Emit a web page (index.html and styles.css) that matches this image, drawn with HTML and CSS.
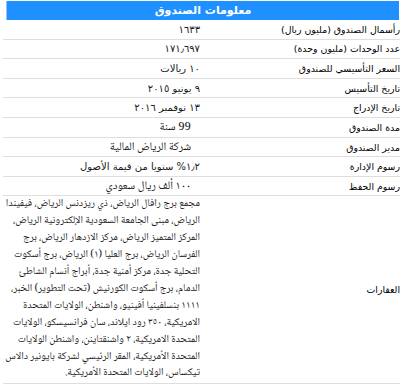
FILE: index.html
```html
<!DOCTYPE html>
<html lang="ar" dir="rtl">
<head>
<meta charset="utf-8">
<title>معلومات الصندوق</title>
<link rel="stylesheet" href="styles.css">
</head>
<body>
<div class="info">
  <div class="head">معلومات الصندوق</div>
  <div class="row"><div class="label">رأسمال الصندوق (مليون ريال)</div><div class="value">١٦٣٣</div></div>
  <div class="row"><div class="label">عدد الوحدات (مليون وحدة)</div><div class="value">١٧١٫٦٩٧</div></div>
  <div class="row"><div class="label">السعر التأسيسي للصندوق</div><div class="value">١٠ ريالات</div></div>
  <div class="row"><div class="label">تاريخ التأسيس</div><div class="value">٩ يونيو ٢٠١٥</div></div>
  <div class="row"><div class="label">تاريخ الإدراج</div><div class="value">١٣ نوفمبر ٢٠١٦</div></div>
  <div class="row"><div class="label">مدة الصندوق</div><div class="value alt">99 سنة</div></div>
  <div class="row"><div class="label">مدير الصندوق</div><div class="value alt">شركة الرياض المالية</div></div>
  <div class="row"><div class="label">رسوم الإدارة</div><div class="value">١٫٢% سنويا من قيمة الأصول</div></div>
  <div class="row"><div class="label">رسوم الحفظ</div><div class="value alt">١٠٠ ألف ريال سعودي</div></div>
  <div class="row tall"><div class="label">العقارات</div><div class="value long"><span class="line">مجمع برج رافال الرياض، ذي ريزدنس الرياض، فيفيندا</span><span class="line">الرياض، مبنى الجامعة السعودية الإلكترونية الرياض،</span><span class="line">المركز المتميز الرياض، مركز الازدهار الرياض، برج</span><span class="line">الفرسان الرياض، برج العليا (١) الرياض، برج أسكوت</span><span class="line">التحلية جدة، مركز أمنية جدة، أبراج أنسام الشاطئ</span><span class="line">الدمام، برج أسكوت الكورنيش (تحت التطوير) الخبر،</span><span class="line">١١١١ بنسلفينيا أفينيو، واشنطن، الولايات المتحدة</span><span class="line">الامريكية، ٣٥٠ رود ايلاند، سان فرانسيسكو، الولايات</span><span class="line">المتحدة الامريكية، ٢ واشنقتاينن، واشنطن الولايات</span><span class="line">المتحدة الأمريكية، المقر الرئيسي لشركة بايونير دالاس</span><span class="line">تيكساس، الولايات المتحدة الأمريكية.</span></div></div>
</div>
</body>
</html>
```
FILE: styles.css
```css
html, body {
  margin: 0;
  padding: 0;
  background: #ffffff;
}

body {
  font-family: Tahoma, "DejaVu Sans", sans-serif;
  color: #1a1a1a;
}

.info {
  direction: rtl;
  width: 397px;
  padding-top: 1px;
}

.head {
  margin: 0 1px 0 3px;
  height: 19px;
  line-height: 19px;
  background: #1e90ff;
  border-left: 1px solid #8cc4ff;
  color: #ffffff;
  font-weight: bold;
  font-size: 11px;
  text-align: center;
}

.row {
  display: grid;
  grid-template-columns: 197px 1fr;
  align-items: center;
  height: 18.6px;
  border-bottom: 1px solid #dedede;
  font-size: 10px;
}

.label {
  text-align: right;
  white-space: nowrap;
  font-size: 9.4px;
  color: #000000;
}

.value {
  text-align: right;
  padding-right: 3px;
  white-space: nowrap;
}

.value.alt {
  font-family: "Noto Naskh Arabic", "DejaVu Sans", serif;
  font-size: 11.5px;
  padding-right: 12px;
}

.row.tall {
  height: auto;
  min-height: 184px;
  border-bottom-width: 2px;
}

.value.long {
  font-family: "Noto Naskh Arabic", "DejaVu Sans", serif;
  font-size: 10.4px;
  line-height: 16.9px;
  padding: 0 3px 1px 3px;
}

.line {
  display: block;
  white-space: nowrap;
}
```
